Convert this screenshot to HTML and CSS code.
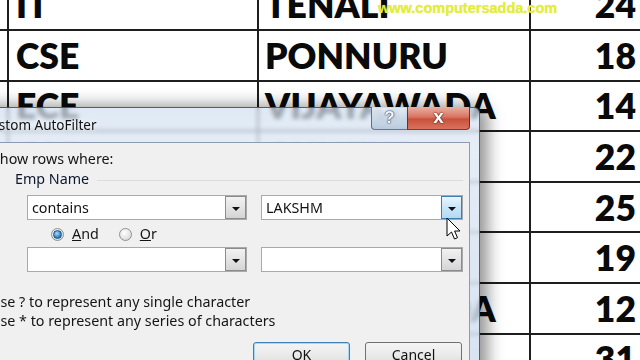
FILE: index.html
```html
<!DOCTYPE html>
<html>
<head>
<meta charset="utf-8">
<link rel="stylesheet" href="styles.css">
</head>
<body>
<div class="sheet">
  <div class="c"></div><div class="c t1">IT</div><div class="c t2">TENALI</div><div class="c num">24</div>
  <div class="c"></div><div class="c t1">CSE</div><div class="c t2">PONNURU</div><div class="c num">18</div>
  <div class="c"></div><div class="c t1">ECE</div><div class="c t2">VIJAYAWADA</div><div class="c num">14</div>
  <div class="c"></div><div class="c t1">CSE</div><div class="c t2">GUNTUR</div><div class="c num">22</div>
  <div class="c"></div><div class="c t1">IT</div><div class="c t2">TENALI</div><div class="c num">25</div>
  <div class="c"></div><div class="c t1">ECE</div><div class="c t2">PONNURU</div><div class="c num">19</div>
  <div class="c"></div><div class="c t1">CSE</div><div class="c t2">VIJAYAWADA</div><div class="c num">12</div>
  <div class="c"></div><div class="c t1">IT</div><div class="c t2">GUNTUR</div><div class="c num">31</div>
</div>

<div class="watermark">www.computersadda.com</div>

<div class="dialog">
  <div class="titlebar">
    <span class="title">Custom AutoFilter</span>
    <div class="caps">
      <span class="cap help">?</span>
      <span class="cap close">x</span>
    </div>
  </div>
  <div class="client">
    <div class="line head">Show rows where:</div>
    <div class="group">
      <span class="glabel">Emp Name</span>
      <span class="gline"></span>
    </div>
    <div class="crow">
      <div class="combo wide"><span class="ctext">contains</span><span class="drop"><span class="arrow"></span></span></div>
      <div class="combo narrow"><span class="ctext">LAKSHM</span><span class="drop hot"><span class="arrow"></span></span></div>
    </div>
    <div class="rrow">
      <span class="radio on"><span class="dot"></span></span><span class="rlabel"><u>A</u>nd</span>
      <span class="radio"></span><span class="rlabel"><u>O</u>r</span>
    </div>
    <div class="crow second">
      <div class="combo wide"><span class="ctext"></span><span class="drop"><span class="arrow"></span></span></div>
      <div class="combo narrow"><span class="ctext"></span><span class="drop"><span class="arrow"></span></span></div>
    </div>
    <div class="line hint first">Use ? to represent any single character</div>
    <div class="line hint">Use * to represent any series of characters</div>
    <div class="brow">
      <span class="btn ok">OK</span>
      <span class="btn">Cancel</span>
    </div>
  </div>
</div>

<svg class="cursor" width="15" height="24" viewBox="0 0 15 24">
  <path d="M1 1 L1 19 L5.5 15 L8.5 22 L11.5 20.7 L8.6 14 L14 14 Z" fill="#fff" stroke="#000" stroke-width="1" stroke-linejoin="round"/>
</svg>
</body>
</html>
```

FILE: styles.css
```css
html, body {
  margin: 0;
  padding: 0;
  width: 640px;
  height: 360px;
  overflow: hidden;
  background: #ffffff;
}

.sheet {
  display: grid;
  grid-template-columns: 7px 248px 270px 1fr;
  grid-auto-rows: 48.6px;
  gap: 2px;
  background: #1e1e1e;
  margin-top: -19.5px;
  width: 640px;
}

.c {
  background: #ffffff;
  display: flex;
  align-items: center;
  font-family: Lato, "Open Sans", sans-serif;
  font-weight: 800;
  font-size: 35.5px;
  color: #0a0a0a;
  white-space: nowrap;
  overflow: hidden;
}

.t1 { padding-left: 7px; }
.t2 { padding-left: 6px; }
.num { justify-content: flex-end; padding-right: 4px; }

.watermark {
  position: absolute;
  left: 378px;
  top: 0px;
  font-family: "Liberation Sans", Arial, sans-serif;
  font-weight: 700;
  font-size: 14.5px;
  color: #e4ee3a;
  text-shadow: 0 0 1px rgba(200, 210, 40, 0.6);
}

.dialog {
  position: absolute;
  left: -20px;
  top: 107px;
  width: 500px;
  height: 290px;
  box-sizing: border-box;
  padding: 0 9px 0 8px;
  border: 1px solid rgba(40, 50, 70, 0.75);
  border-radius: 6px 6px 0 0;
  background: linear-gradient(to bottom, rgba(210, 224, 240, 0.7), rgba(222, 232, 244, 0.8) 40px, rgba(206, 221, 239, 0.85));
  backdrop-filter: blur(2px);
  box-shadow: 4px 2px 16px 4px rgba(0, 0, 0, 0.42);
}

.titlebar {
  height: 34px;
  display: flex;
  justify-content: space-between;
  align-items: flex-start;
}

.title {
  font-family: "Noto Sans", "Open Sans", sans-serif;
  font-size: 13.5px;
  color: #111;
  margin-left: -7px;
  margin-top: 8px;
  text-shadow: 0 0 6px rgba(255, 255, 255, 0.9);
}

.caps {
  display: flex;
  margin-top: -1px;
}

.cap {
  height: 23px;
  box-sizing: border-box;
  display: flex;
  align-items: center;
  justify-content: center;
  font-family: "Liberation Sans", Arial, sans-serif;
  font-weight: 700;
  color: #ffffff;
}

.help {
  width: 36px;
  border: 1px solid rgba(60, 78, 105, 0.75);
  border-top: none;
  border-right: none;
  border-radius: 0 0 0 4px;
  background: linear-gradient(to bottom, rgba(235, 242, 250, 0.85), rgba(200, 214, 230, 0.85) 50%, rgba(180, 198, 220, 0.85));
  font-size: 17px;
  color: #f4f6f8;
  text-shadow: 0 0 1px #40506a, 0 0 2px #40506a, 0 0 1px #40506a;
}

.close {
  width: 63px;
  border: 1px solid rgba(90, 30, 25, 0.8);
  border-top: none;
  border-radius: 0 0 4px 0;
  background: linear-gradient(to bottom, #e9b0a3, #d87462 45%, #c9513e 55%, #d9745c);
  font-size: 19px;
  padding-bottom: 3px;
  text-shadow: 0 0 1px #5a1a10, 0 0 2px #5a1a10;
}

.client {
  height: 260px;
  box-sizing: border-box;
  background: #f0f0f0;
  border: 1px solid #8a9bb2;
  padding-left: 11px;
  font-family: "Noto Sans", "Open Sans", sans-serif;
  font-size: 14.3px;
  color: #151515;
  display: flex;
  flex-direction: column;
}

.line {
  height: 19px;
  line-height: 19px;
  white-space: nowrap;
}

.head {
  margin-top: 6px;
  margin-left: -9px;
}

.group {
  height: 18px;
  margin-top: 2px;
  display: flex;
  align-items: center;
  margin-left: 14px;
  width: 448px;
}

.glabel {
  line-height: 18px;
  color: #0c1830;
}

.gline {
  flex: 1;
  height: 1px;
  background: #d8dde2;
  margin-left: 8px;
  margin-top: 2px;
}

.crow {
  display: flex;
  margin-top: 7px;
  margin-left: 26px;
  gap: 14px;
  height: 25px;
}

.crow.second { margin-top: 5px; }

.combo {
  height: 25px;
  box-sizing: border-box;
  background: #ffffff;
  border: 1px solid #a7a9ad;
  display: flex;
  align-items: stretch;
}

.combo.wide { width: 220px; }
.combo.narrow { width: 202px; }

.ctext {
  flex: 1;
  padding-left: 4px;
  line-height: 23px;
  color: #111;
}

.drop {
  width: 21px;
  box-sizing: border-box;
  border: 1px solid #8c8c8c;
  background: linear-gradient(to bottom, #f2f2f2, #e4e4e4 50%, #d4d4d4);
  display: flex;
  align-items: center;
  justify-content: center;
}

.drop.hot {
  border-color: #3c7fb1;
  background: linear-gradient(to bottom, #e8f5fd, #c9e6f8 50%, #b3daf3);
}

.arrow {
  width: 0;
  height: 0;
  border-left: 4px solid transparent;
  border-right: 4px solid transparent;
  border-top: 4px solid #111;
  margin-top: 2px;
}

.rrow {
  display: flex;
  align-items: center;
  height: 16px;
  margin-top: 6px;
  margin-left: 50px;
}

.radio {
  width: 13px;
  height: 13px;
  box-sizing: border-box;
  border-radius: 50%;
  border: 1px solid #8d9097;
  background: radial-gradient(circle at 40% 35%, #ffffff, #e2e2e2 60%, #cfcfcf);
  display: flex;
  align-items: center;
  justify-content: center;
}

.dot {
  width: 7px;
  height: 7px;
  border-radius: 50%;
  background: radial-gradient(circle at 40% 35%, #a8def9, #3a8fcf 55%, #1b5f9c);
  border: 0.5px solid #1d4f80;
}

.rlabel {
  margin-left: 8px;
  margin-right: 20px;
  line-height: 16px;
}

.hint {
  margin-left: -11px;
}

.hint.first { margin-top: 20px; }

.brow {
  display: flex;
  margin-top: 12px;
  margin-left: 252px;
  gap: 15px;
}

.btn {
  width: 97px;
  height: 24px;
  box-sizing: border-box;
  border: 1px solid #707070;
  border-radius: 3px;
  background: linear-gradient(to bottom, #f4f4f4, #ebebeb 50%, #dddddd);
  display: flex;
  align-items: center;
  justify-content: center;
  font-size: 14px;
  color: #111;
}

.btn.ok {
  width: 97px;
  border-color: #3c7fb1;
  box-shadow: inset 0 0 0 1px #a6d8f6;
}

.cursor {
  position: absolute;
  left: 446px;
  top: 217px;
}
```
